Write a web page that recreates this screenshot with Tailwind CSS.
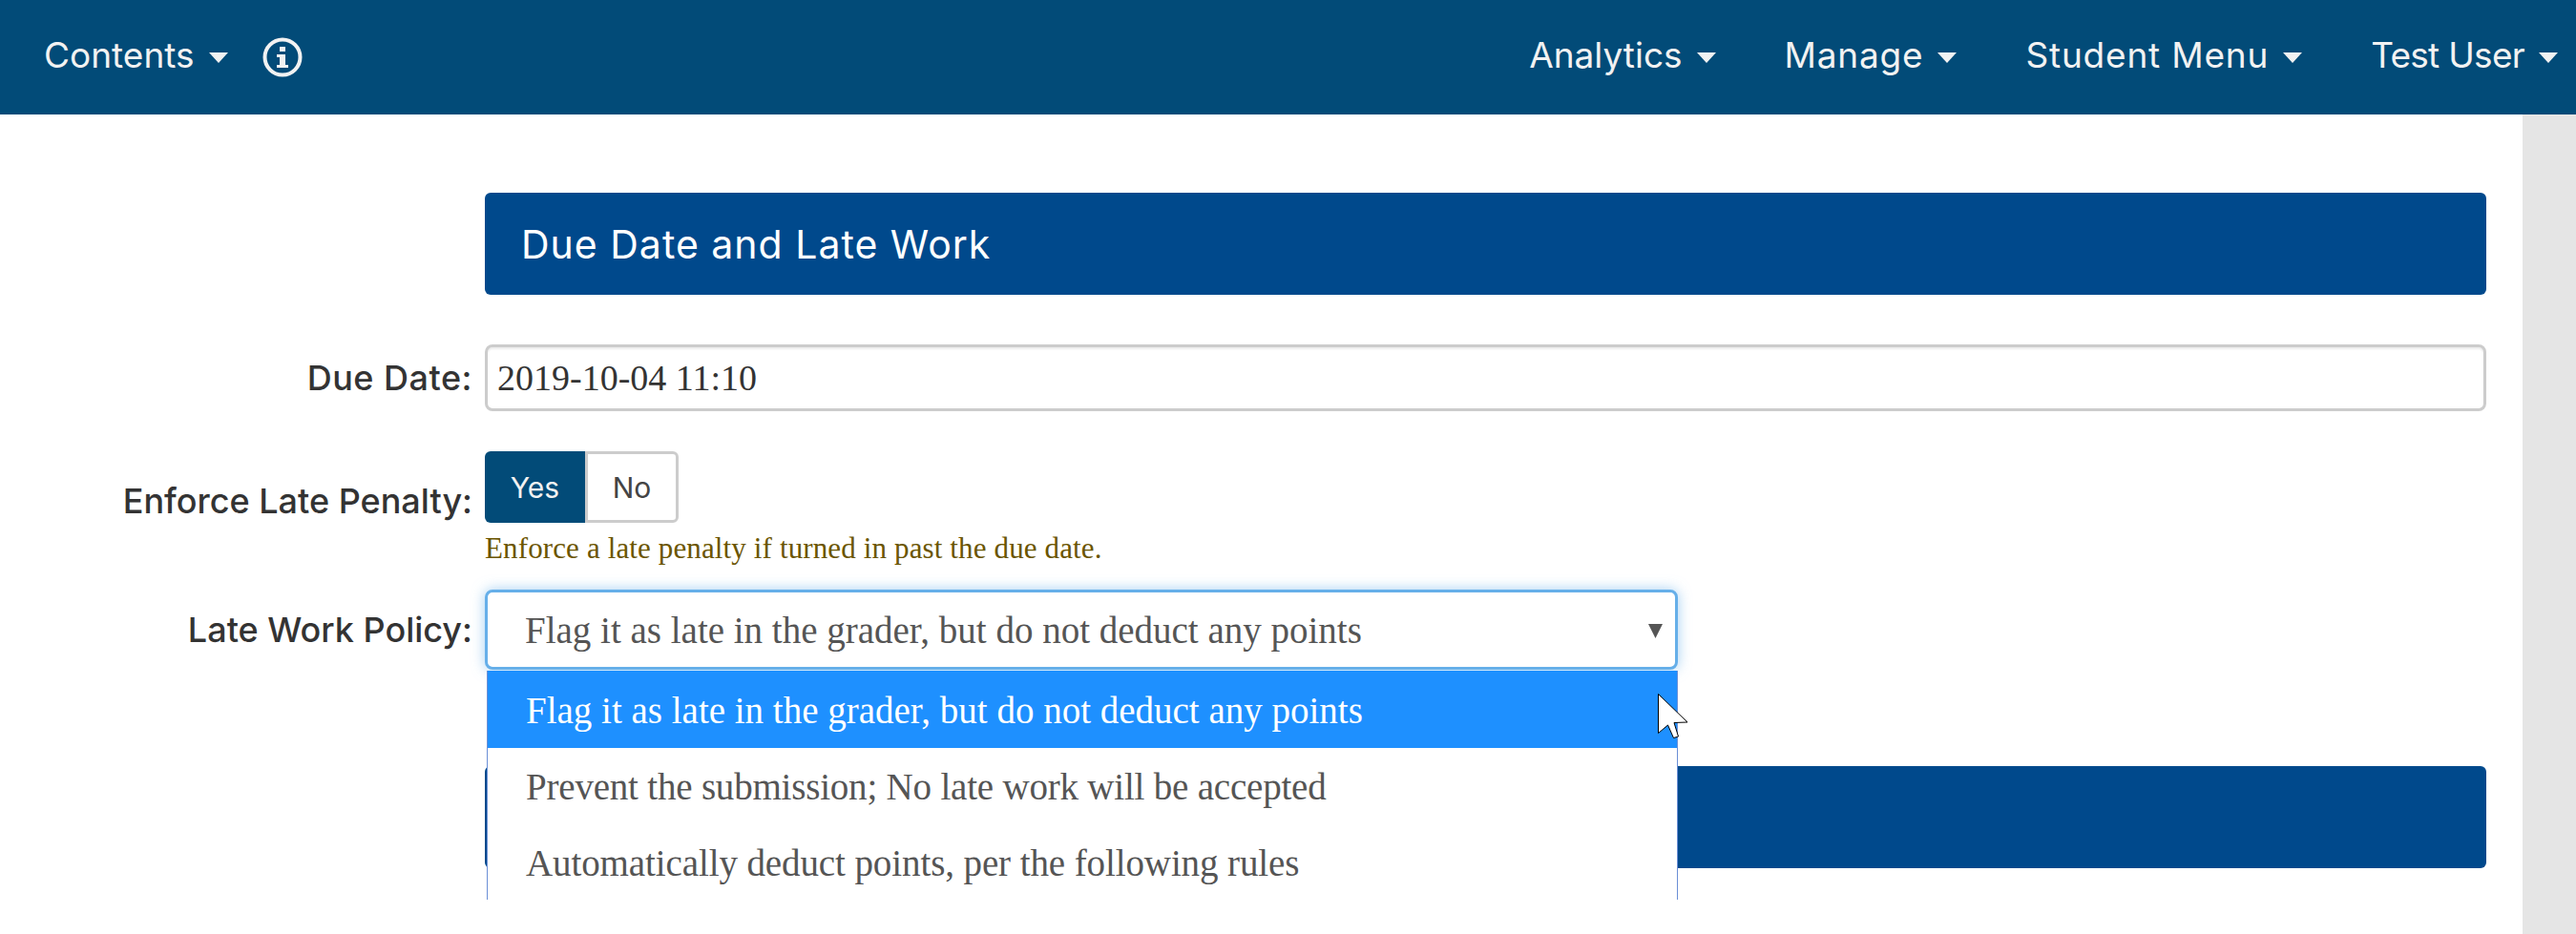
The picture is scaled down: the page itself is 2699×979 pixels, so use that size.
<!DOCTYPE html>
<html lang="en">
<head>
    <meta charset="UTF-8">
    <title>Due Date and Late Work</title>
    <script src="https://cdn.jsdelivr.net/npm/@tailwindcss/browser@4"></script>
</head>
<body class="h-[979px] overflow-hidden bg-white font-['Inter',sans-serif]">

    <!-- Top nav -->
    <header class="h-[120px] bg-[#024b78] text-[#f2f2f2] text-[37px] flex items-center justify-between pl-[46px] pr-[19px]">
        <div class="flex items-center">
            <span class="-mt-[4px]">Contents</span>
            <svg class="ml-[15px] w-[20px] h-[11px]" viewBox="0 0 20 11"><path d="M0 0h20L10 11z" fill="currentColor"/></svg>
            <svg class="ml-[36px] w-[42px] h-[42px]" viewBox="0 0 42 42">
                <circle cx="21" cy="21" r="18.5" fill="none" stroke="currentColor" stroke-width="4"/>
                <rect x="18" y="10" width="6" height="5" fill="currentColor"/>
                <path d="M15 18h9v11h3v3H15v-3h3v-8h-3z" fill="currentColor"/>
            </svg>
        </div>
        <nav class="flex items-center gap-[72px]">
            <div class="flex items-center"><span class="-mt-[4px]">Analytics</span><svg class="ml-[15px] w-[20px] h-[11px]" viewBox="0 0 20 11"><path d="M0 0h20L10 11z" fill="currentColor"/></svg></div>
            <div class="flex items-center"><span class="-mt-[4px] tracking-[0.8px]">Manage</span><svg class="ml-[15px] w-[20px] h-[11px]" viewBox="0 0 20 11"><path d="M0 0h20L10 11z" fill="currentColor"/></svg></div>
            <div class="flex items-center"><span class="-mt-[4px] tracking-[0.8px]">Student Menu</span><svg class="ml-[15px] w-[20px] h-[11px]" viewBox="0 0 20 11"><path d="M0 0h20L10 11z" fill="currentColor"/></svg></div>
            <div class="flex items-center"><span class="-mt-[4px] tracking-[-0.7px]">Test User</span><svg class="ml-[15px] w-[20px] h-[11px]" viewBox="0 0 20 11"><path d="M0 0h20L10 11z" fill="currentColor"/></svg></div>
        </nav>
    </header>

    <div class="flex h-[859px]">
        <!-- Form -->
        <main class="flex-1 pl-[508px] pr-[38px] pt-[82px] relative">
            <div class="h-[107px] bg-[#00498c] rounded-[6px] text-white text-[41px] tracking-[1px] flex items-center pl-[38px] pt-[2px]">Due Date and Late Work</div>

            <div class="mt-[52px] relative">
                <div class="absolute right-full mr-[13px] top-0 h-full flex items-center whitespace-nowrap text-[36px] font-medium tracking-[0.5px] text-[#333]">Due Date:</div>
                <div class="h-[70px] border-[3px] border-[#ccc] rounded-[8px] shadow-[inset_0_2px_2px_rgba(0,0,0,0.08)] flex items-center pl-[10px] font-['Liberation_Serif',serif] text-[38px] text-[#333]">2019-10-04 11:10</div>
            </div>

            <div class="mt-[42px] relative">
                <div class="absolute right-full mr-[13px] top-[32px] leading-[40px] whitespace-nowrap text-[36px] font-medium text-[#333]">Enforce Late Penalty:</div>
                <div class="flex h-[75px] w-[203px] text-[30px]">
                    <div class="w-[105px] bg-[#024b78] text-[#f2f2f2] rounded-l-[6px] flex items-center justify-center pt-[2px]">Yes</div>
                    <div class="flex-1 border-[3px] border-[#ccc] rounded-r-[6px] text-[#444] flex items-center justify-center pt-[2px]">No</div>
                </div>
                <p class="mt-[5px] h-[44px] leading-[44px] font-['Liberation_Serif',serif] text-[31px] tracking-[0.13px] text-[#6b5500]">Enforce a late penalty if turned in past the due date.</p>
            </div>

            <div class="mt-[21px] relative w-[1250px] z-10">
                <div class="absolute right-full mr-[13px] top-0 h-full flex items-center whitespace-nowrap text-[36px] font-medium text-[#333]">Late Work Policy:</div>
                <div class="h-[84px] border-[3px] border-[#66afe9] rounded-[8px] shadow-[0_0_14px_rgba(102,175,233,0.6)] bg-white flex items-center justify-between pl-[39px] pr-[13px] pt-[3px] font-['Liberation_Serif',serif] text-[39px] text-[#555]">
                    <span>Flag it as late in the grader, but do not deduct any points</span>
                    <svg class="w-[15px] h-[15px]" viewBox="0 0 15 15"><path d="M0 0h15L7.500 15z" fill="#555"/></svg>
                </div>
                <!-- Open dropdown list, cut off by the window of the list -->
                <ul class="absolute left-[2px] right-0 top-[85px] h-[240px] bg-white border-x border-[#6b8fd6] font-['Liberation_Serif',serif] text-[39px] text-[#555]">
                    <li class="h-[81px] bg-[#1e90ff] text-white flex items-center pl-[40px] pt-[3px]">Flag it as late in the grader, but do not deduct any points</li>
                    <li class="h-[80px] flex items-center pl-[40px] pt-[3px] tracking-[-0.2px]">Prevent the submission; No late work will be accepted</li>
                    <li class="h-[80px] flex items-center pl-[40px] pt-[3px] tracking-[-0.1px]">Automatically deduct points, per the following rules</li>
                </ul>
                <!-- Mouse pointer -->
                <svg class="absolute left-[1229px] top-[109px] w-[32px] h-[48px]" viewBox="0 0 32 48">
                    <path d="M0.5 0.5L31 30L17 30.500L21.500 45L16.500 46.500L10.500 33L0.500 41.500z" fill="#fff" stroke="#000" stroke-width="1"/>
                </svg>
            </div>

            <div class="mt-[101px] h-[107px] bg-[#00498c] rounded-[6px]"></div>
        </main>

        <!-- Scrollbar track -->
        <div class="w-[56px] bg-[#e5e5e5]"></div>
    </div>
</body>
</html>
